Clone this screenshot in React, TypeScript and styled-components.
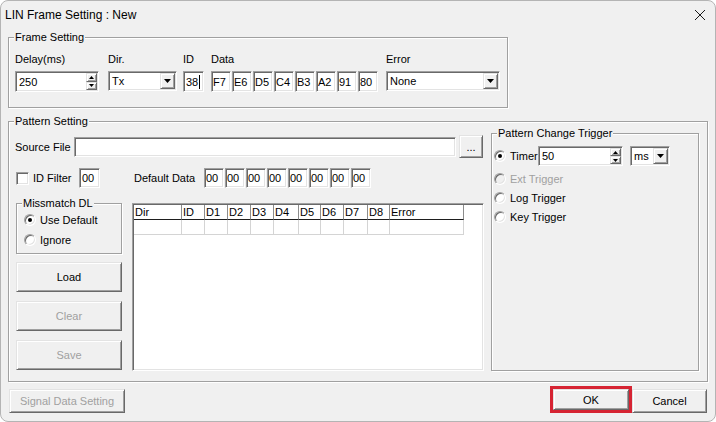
import React from "react";
import styled, { createGlobalStyle, css } from "styled-components";

const FACE = "#f0f0f0";
const SHADOW = "#a0a0a0";
const DARK = "#696969";
const LIGHT = "#e3e3e3";
const GRAYTEXT = "#a0a0a0";

const GlobalStyle = createGlobalStyle`
  html, body { margin: 0; padding: 0; background: #ffffff; }
  body {
    font-family: "Liberation Sans", Arial, sans-serif;
    font-size: 11px;
    color: #000;
  }
  * { box-sizing: border-box; }
`;

const Window = styled.div`
  width: 716px;
  height: 422px;
  background: ${FACE};
  border: 1px solid #b4b4b4;
  border-radius: 8px;
  display: flex;
  flex-direction: column;
  overflow: hidden;
`;

const TitleBar = styled.div`
  height: 28px;
  flex: none;
  display: flex;
  align-items: center;
  justify-content: space-between;
  padding: 0 9px 0 4px;
  font-size: 12px;
`;

const Body = styled.div`
  display: flex;
  flex-direction: column;
  padding: 8px 8px 0 7px;
`;

const Group = styled.div<{ $w: number; $h: number }>`
  position: relative;
  flex: none;
  width: ${(p) => p.$w}px;
  height: ${(p) => p.$h}px;
  border: 1px solid ${SHADOW};
  box-shadow: inset 1px 1px 0 #fff, 1px 1px 0 #fff;
`;

const Caption = styled.span`
  position: absolute;
  top: -8px;
  left: 5px;
  padding: 0 1px;
  line-height: 14px;
  background: ${FACE};
  white-space: nowrap;
`;

const FrameRow = styled.div`
  display: flex;
  align-items: flex-start;
  padding: 14px 0 0 6px;
`;

const Field = styled.div<{ $w: number; $ml?: number }>`
  display: flex;
  flex-direction: column;
  gap: 5px;
  width: ${(p) => p.$w}px;
  margin-left: ${(p) => p.$ml ?? 0}px;
`;

const FieldLabel = styled.div`
  line-height: 14px;
  height: 14px;
  white-space: nowrap;
`;

const sunken = css`
  border: 1px solid;
  border-color: ${SHADOW} #fff #fff ${SHADOW};
  box-shadow: inset 1px 1px 0 ${DARK}, inset -1px -1px 0 ${LIGHT};
`;

const raised = css`
  border: 1px solid;
  border-color: ${LIGHT} ${DARK} ${DARK} ${LIGHT};
  box-shadow: inset 1px 1px 0 #fff, inset -1px -1px 0 ${SHADOW};
`;

const TextBox = styled.div<{ $w: number; $h?: number; $pl?: number }>`
  ${sunken};
  position: relative;
  flex: none;
  width: ${(p) => p.$w}px;
  height: ${(p) => p.$h ?? 21}px;
  background: #fff;
  display: flex;
  align-items: center;
  padding-left: ${(p) => p.$pl ?? 3}px;
  white-space: nowrap;
  overflow: hidden;
`;

const Caret = styled.span`
  display: inline-block;
  width: 1px;
  height: 14px;
  background: #000;
  margin-left: 1px;
`;

const BoxText = styled.span`
  flex: 1;
`;

const SpinCol = styled.div`
  display: flex;
  flex-direction: column;
  width: 12px;
  height: 100%;
  padding: 1px 1px 1px 0;
`;

const SpinHalf = styled.div`
  ${raised};
  flex: 1;
  background: ${FACE};
  display: flex;
  align-items: center;
  justify-content: center;
`;

const DropButton = styled.div`
  ${raised};
  width: 15px;
  height: calc(100% - 2px);
  margin-right: 1px;
  background: ${FACE};
  display: flex;
  align-items: center;
  justify-content: center;
`;

const BoxRow = styled.div`
  display: flex;
  gap: 1px;
`;

const PatternInner = styled.div`
  display: flex;
  align-items: flex-start;
  padding: 11px 0 0 6px;
`;

const LeftCol = styled.div`
  display: flex;
  flex-direction: column;
  width: 469px;
  margin-top: 2px;
`;

const Row = styled.div<{ $mt?: number; $h?: number }>`
  display: flex;
  align-items: center;
  margin-top: ${(p) => p.$mt ?? 0}px;
  height: ${(p) => (p.$h ? `${p.$h}px` : "auto")};
`;

const Label = styled.span<{ $w?: number; $ml?: number; $disabled?: boolean }>`
  flex: none;
  width: ${(p) => (p.$w ? `${p.$w}px` : "auto")};
  margin-left: ${(p) => p.$ml ?? 0}px;
  color: ${(p) => (p.$disabled ? GRAYTEXT : "#000")};
  line-height: 14px;
  white-space: nowrap;
`;

const Button = styled.button<{ $w: number; $h: number; $ml?: number }>`
  ${raised};
  flex: none;
  width: ${(p) => p.$w}px;
  height: ${(p) => p.$h}px;
  margin-left: ${(p) => p.$ml ?? 0}px;
  background: ${FACE};
  font-family: "Liberation Sans", Arial, sans-serif;
  font-size: 11px;
  color: #000;
  padding: 0;
  &:disabled {
    color: ${GRAYTEXT};
  }
`;

const CheckBox = styled.span`
  ${sunken};
  width: 13px;
  height: 13px;
  flex: none;
  background: #fff;
  margin-left: 1px;
`;

const Lower = styled.div`
  display: flex;
  align-items: flex-start;
  margin-top: 15px;
`;

const SideCol = styled.div`
  display: flex;
  flex-direction: column;
  width: 106px;
  margin-left: 1px;
  gap: 9px;
`;

const RadioList = styled.div<{ $pt: number; $pl: number }>`
  display: flex;
  flex-direction: column;
  padding: ${(p) => p.$pt}px 0 0 ${(p) => p.$pl}px;
`;

const RadioRow = styled.div<{ $mt?: number; $disabled?: boolean }>`
  display: flex;
  align-items: center;
  gap: 4px;
  height: 14px;
  margin-top: ${(p) => p.$mt ?? 0}px;
  color: ${(p) => (p.$disabled ? GRAYTEXT : "#000")};
`;

const RadioDot = styled.span<{ $on?: boolean; $disabled?: boolean }>`
  position: relative;
  flex: none;
  width: 12px;
  height: 12px;
  border-radius: 50%;
  border: 1px solid;
  border-color: ${SHADOW} #fff #fff ${SHADOW};
  box-shadow: inset 1px 1px 0 ${DARK}, inset -1px -1px 0 ${LIGHT};
  background: ${(p) => (p.$disabled ? FACE : "#fff")};
  ${(p) =>
    p.$on &&
    css`
      &::after {
        content: "";
        position: absolute;
        left: 3px;
        top: 3px;
        width: 4px;
        height: 4px;
        border-radius: 50%;
        background: #000;
      }
    `}
`;

const TimerRow = styled.div`
  display: flex;
  align-items: center;
  height: 20px;
`;

const ListView = styled.div`
  ${sunken};
  width: 352px;
  height: 168px;
  margin-left: 10px;
  background: #fff;
  padding: 1px 0 0 1px;
`;

const COLS = [48, 23, 23, 23, 23, 25, 22, 23, 24, 22, 74];

const Grid = styled.div`
  display: grid;
  grid-template-columns: ${COLS.map((c) => `${c}px`).join(" ")};
  width: ${COLS.reduce((a, b) => a + b, 0)}px;
`;

const HeadCell = styled.div`
  height: 15px;
  line-height: 14px;
  padding-left: 1px;
  border-right: 1px solid #8c8c8c;
  border-bottom: 1px solid #1e1e1e;
  white-space: nowrap;
  overflow: hidden;
`;

const Cell = styled.div`
  height: 15px;
  border-right: 1px solid #d4d4d4;
  border-bottom: 1px solid #d4d4d4;
`;

const BottomRow = styled.div`
  display: flex;
  align-items: flex-start;
  margin-top: 7px;
`;

const Spacer = styled.div`
  flex: 1;
`;

const Highlight = styled.div`
  border: 3px solid #d62433;
  margin-top: -3px;
  display: flex;
`;

const UpArrow = () => (
  <svg width="5" height="3" viewBox="0 0 5 3">
    <polygon points="2.5,0 5,3 0,3" fill="#000" />
  </svg>
);

const DownArrow = ({ w = 5, h = 3 }: { w?: number; h?: number }) => (
  <svg width={w} height={h} viewBox={`0 0 ${w} ${h}`}>
    <polygon points={`0,0 ${w},0 ${w / 2},${h}`} fill="#000" />
  </svg>
);

const CloseIcon = () => (
  <svg width="12" height="12" viewBox="0 0 12 12">
    <path d="M1 1 L11 11 M11 1 L1 11" stroke="#1a1a1a" strokeWidth="1" fill="none" />
  </svg>
);

const Spin = ({ w, value }: { w: number; value: string }) => (
  <TextBox $w={w} $h={20} $pl={3} style={{ paddingRight: 0 }}>
    <BoxText>{value}</BoxText>
    <SpinCol>
      <SpinHalf>
        <UpArrow />
      </SpinHalf>
      <SpinHalf>
        <DownArrow />
      </SpinHalf>
    </SpinCol>
  </TextBox>
);

const Combo = ({ w, value }: { w: number; value: string }) => (
  <TextBox $w={w} $h={20} $pl={3}>
    <BoxText>{value}</BoxText>
    <DropButton>
      <DownArrow w={7} h={4} />
    </DropButton>
  </TextBox>
);

const DATA = ["F7", "E6", "D5", "C4", "B3", "A2", "91", "80"];
const HEADERS = ["Dir", "ID", "D1", "D2", "D3", "D4", "D5", "D6", "D7", "D8", "Error"];

export default function App() {
  return (
    <>
      <GlobalStyle />
      <Window>
        <TitleBar>
          <span>LIN Frame Setting : New</span>
          <CloseIcon />
        </TitleBar>
        <Body>
          <Group $w={500} $h={71}>
            <Caption>Frame Setting</Caption>
            <FrameRow>
              <Field $w={84}>
                <FieldLabel>Delay(ms)</FieldLabel>
                <TextBox $w={84} $pl={3} style={{ paddingRight: 0 }}>
                  <BoxText>250</BoxText>
                  <SpinCol>
                    <SpinHalf>
                      <UpArrow />
                    </SpinHalf>
                    <SpinHalf>
                      <DownArrow />
                    </SpinHalf>
                  </SpinCol>
                </TextBox>
              </Field>
              <Field $w={69} $ml={9}>
                <FieldLabel>Dir.</FieldLabel>
                <Combo w={69} value="Tx" />
              </Field>
              <Field $w={21} $ml={6}>
                <FieldLabel>ID</FieldLabel>
                <TextBox $w={21} $pl={2}>
                  38
                  <Caret />
                </TextBox>
              </Field>
              <Field $w={167} $ml={7}>
                <FieldLabel>Data</FieldLabel>
                <BoxRow>
                  {DATA.map((d) => (
                    <TextBox key={d} $w={20} $pl={1}>
                      {d}
                    </TextBox>
                  ))}
                </BoxRow>
              </Field>
              <Field $w={114} $ml={8}>
                <FieldLabel>Error</FieldLabel>
                <Combo w={114} value="None" />
              </Field>
            </FrameRow>
          </Group>

          <div style={{ height: 13 }} />

          <Group $w={700} $h={261}>
            <Caption>Pattern Setting</Caption>
            <PatternInner>
              <LeftCol>
                <Row $h={23}>
                  <Label $w={59}>Source File</Label>
                  <TextBox $w={382} $h={20} />
                  <Button $w={24} $h={23} $ml={3}>
                    ...
                  </Button>
                </Row>
                <Row $mt={10} $h={20}>
                  <CheckBox />
                  <Label $w={46} $ml={4}>
                    ID Filter
                  </Label>
                  <TextBox $w={21} $h={20} $pl={2}>
                    00
                  </TextBox>
                  <Label $w={70} $ml={34}>
                    Default Data
                  </Label>
                  <BoxRow>
                    {DATA.map((d) => (
                      <TextBox key={d} $w={20} $h={20} $pl={1}>
                        00
                      </TextBox>
                    ))}
                  </BoxRow>
                </Row>
                <Lower>
                  <SideCol>
                    <Group $w={106} $h={51}>
                      <Caption>Missmatch DL</Caption>
                      <RadioList $pt={9} $pl={7}>
                        <RadioRow>
                          <RadioDot $on />
                          Use Default
                        </RadioRow>
                        <RadioRow $mt={6}>
                          <RadioDot />
                          Ignore
                        </RadioRow>
                      </RadioList>
                    </Group>
                    <Button $w={106} $h={30} style={{ marginTop: -1 }}>
                      Load
                    </Button>
                    <Button $w={106} $h={30} disabled>
                      Clear
                    </Button>
                    <Button $w={106} $h={30} disabled>
                      Save
                    </Button>
                  </SideCol>
                  <ListView>
                    <Grid>
                      {HEADERS.map((h) => (
                        <HeadCell key={h}>{h}</HeadCell>
                      ))}
                      {HEADERS.map((h) => (
                        <Cell key={h} />
                      ))}
                    </Grid>
                  </ListView>
                </Lower>
              </LeftCol>

              <div style={{ width: 7 }} />

              <Group $w={208} $h={238}>
                <Caption>Pattern Change Trigger</Caption>
                <RadioList $pt={12} $pl={2}>
                  <TimerRow>
                    <RadioDot $on />
                    <Label $w={28} $ml={4}>
                      Timer
                    </Label>
                    <Spin w={85} value="50" />
                    <div style={{ width: 7 }} />
                    <Combo w={40} value="ms" />
                  </TimerRow>
                  <RadioRow $mt={6} $disabled>
                    <RadioDot $disabled />
                    Ext Trigger
                  </RadioRow>
                  <RadioRow $mt={5}>
                    <RadioDot />
                    Log Trigger
                  </RadioRow>
                  <RadioRow $mt={5}>
                    <RadioDot />
                    Key Trigger
                  </RadioRow>
                </RadioList>
              </Group>
            </PatternInner>
          </Group>

          <BottomRow>
            <Button $w={116} $h={24} $ml={1} disabled>
              Signal Data Setting
            </Button>
            <Spacer />
            <Highlight>
              <Button $w={76} $h={21}>
                OK
              </Button>
            </Highlight>
            <Button $w={75} $h={24}>
              Cancel
            </Button>
          </BottomRow>
        </Body>
      </Window>
    </>
  );
}
